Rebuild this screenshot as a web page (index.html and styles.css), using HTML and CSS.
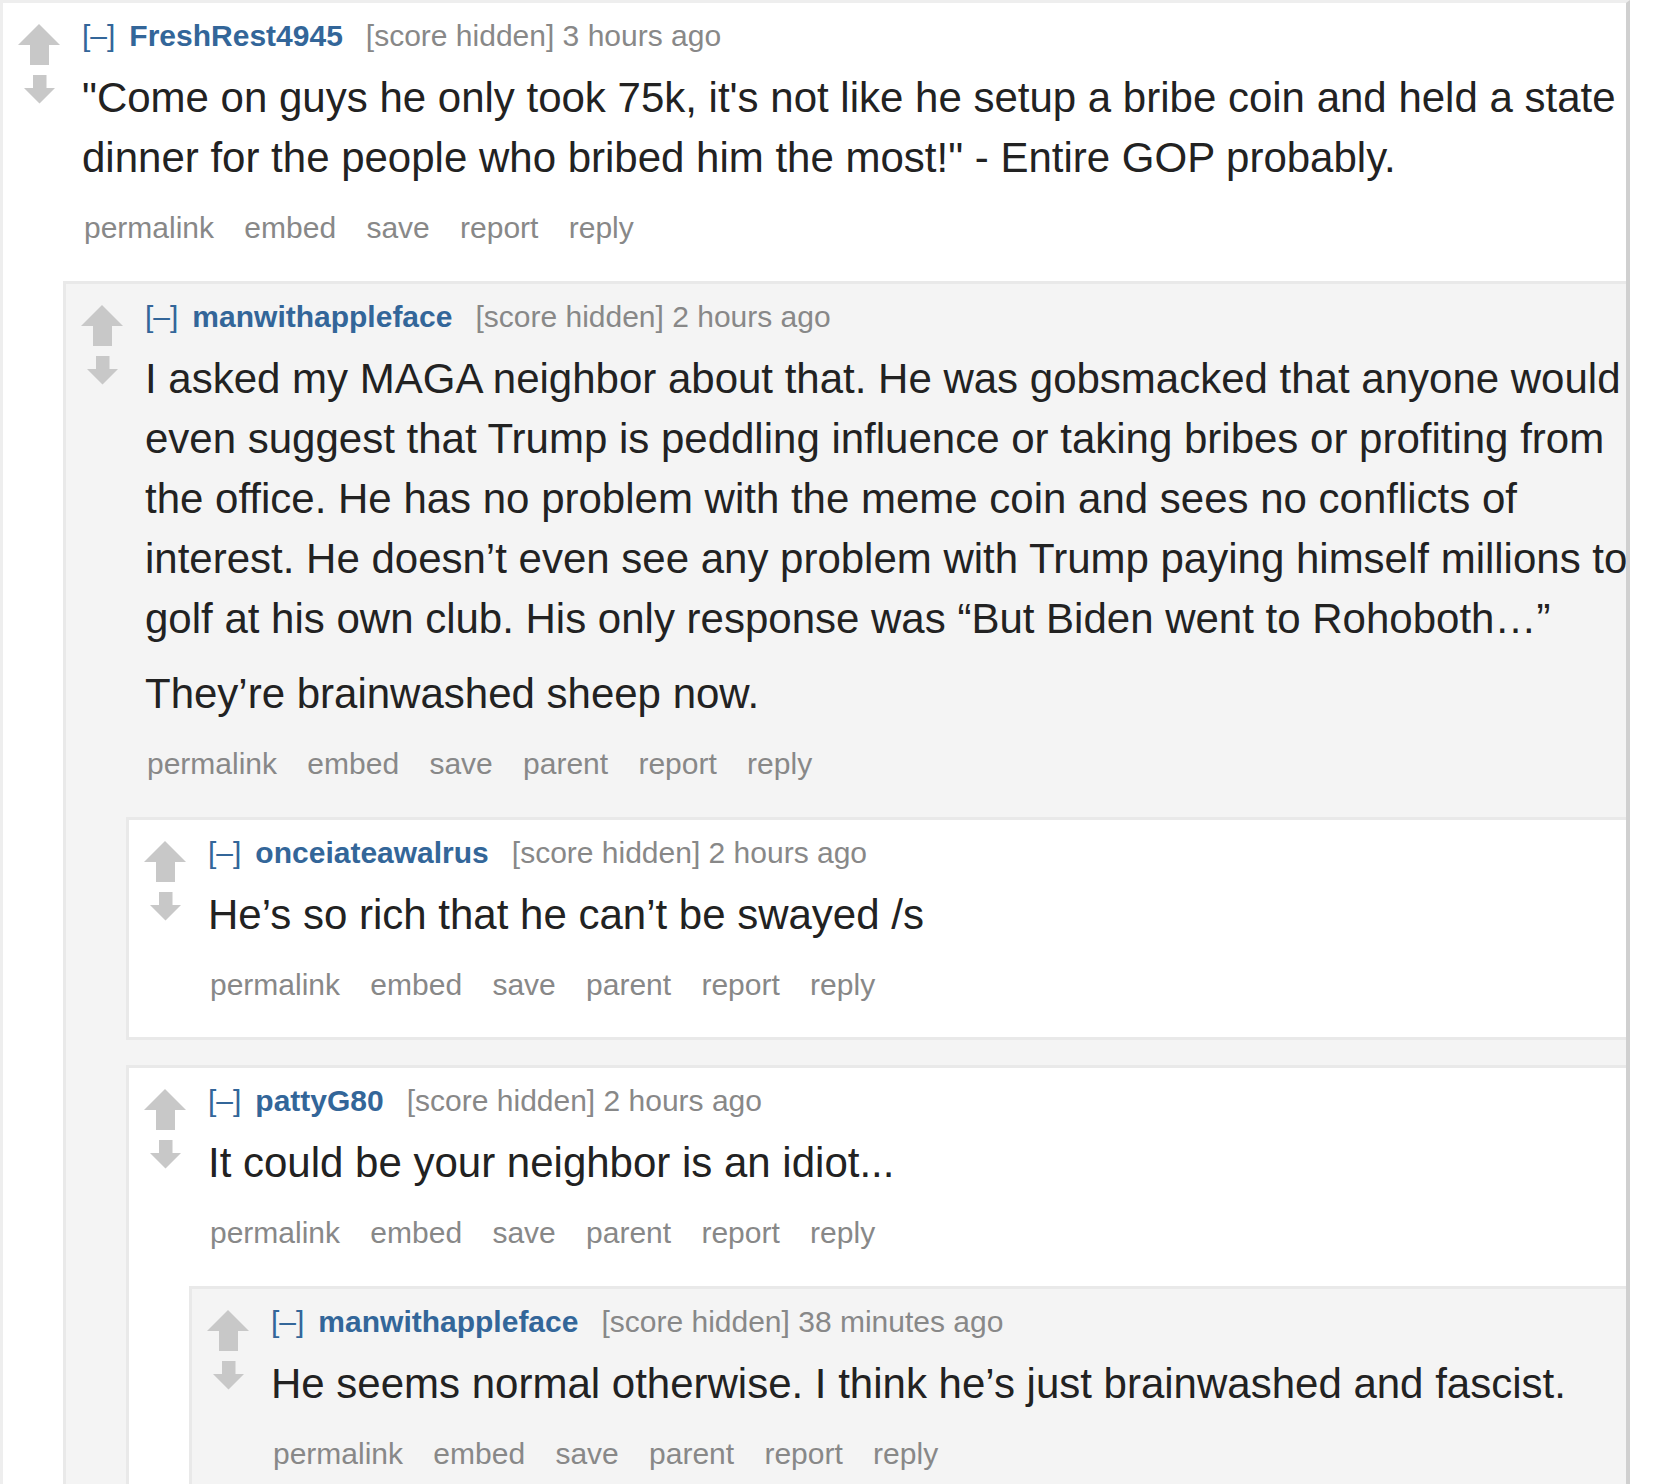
FILE: index.html
```html
<!DOCTYPE html>
<html>
<head>
<meta charset="utf-8">
<title>comments</title>
<link rel="stylesheet" href="styles.css">
</head>
<body>
<div class="frame">
  <div class="thread">
    <div class="comment">
      <div class="row">
        <div class="midcol"><svg class="arrows" viewBox="0 0 42 80"><path d="M21 0 L42 21 L31 21 L31 41 L12 41 L12 21 L0 21 Z"/><path d="M15 51 L28.5 51 L28.5 64 L37 64 L21.5 79.5 L6 64 L15 64 Z"/></svg></div>
        <div class="entry">
          <p class="tagline"><a class="expand">[–]</a><a class="author">FreshRest4945</a><span class="score">[score hidden] 3 hours ago</span></p>
          <div class="md">
            <p>"Come on guys he only took 75k, it's not like he setup a bribe coin and held a state dinner for the people who bribed him the most!" - Entire GOP probably.</p>
          </div>
          <ul class="buttons"><li>permalink</li><li>embed</li><li>save</li><li>report</li><li>reply</li></ul>
        </div>
      </div>
      <div class="child">
        <div class="comment box odd">
          <div class="row">
            <div class="midcol"><svg class="arrows" viewBox="0 0 42 80"><path d="M21 0 L42 21 L31 21 L31 41 L12 41 L12 21 L0 21 Z"/><path d="M15 51 L28.5 51 L28.5 64 L37 64 L21.5 79.5 L6 64 L15 64 Z"/></svg></div>
            <div class="entry">
              <p class="tagline"><a class="expand">[–]</a><a class="author">manwithappleface</a><span class="score">[score hidden] 2 hours ago</span></p>
              <div class="md">
                <p>I asked my MAGA neighbor about that. He was gobsmacked that anyone would even suggest that Trump is peddling influence or taking bribes or profiting from the office. He has no problem with the meme coin and sees no conflicts of interest. He doesn’t even see any problem with Trump paying himself millions to golf at his own club. His only response was “But Biden went to Rohoboth…”</p>
                <p>They’re brainwashed sheep now.</p>
              </div>
              <ul class="buttons"><li>permalink</li><li>embed</li><li>save</li><li>parent</li><li>report</li><li>reply</li></ul>
            </div>
          </div>
          <div class="child">
            <div class="comment box even">
              <div class="row">
                <div class="midcol"><svg class="arrows" viewBox="0 0 42 80"><path d="M21 0 L42 21 L31 21 L31 41 L12 41 L12 21 L0 21 Z"/><path d="M15 51 L28.5 51 L28.5 64 L37 64 L21.5 79.5 L6 64 L15 64 Z"/></svg></div>
                <div class="entry">
                  <p class="tagline"><a class="expand">[–]</a><a class="author">onceiateawalrus</a><span class="score">[score hidden] 2 hours ago</span></p>
                  <div class="md">
                    <p>He’s so rich that he can’t be swayed /s</p>
                  </div>
                  <ul class="buttons"><li>permalink</li><li>embed</li><li>save</li><li>parent</li><li>report</li><li>reply</li></ul>
                </div>
              </div>
            </div>
            <div class="comment box even">
              <div class="row">
                <div class="midcol"><svg class="arrows" viewBox="0 0 42 80"><path d="M21 0 L42 21 L31 21 L31 41 L12 41 L12 21 L0 21 Z"/><path d="M15 51 L28.5 51 L28.5 64 L37 64 L21.5 79.5 L6 64 L15 64 Z"/></svg></div>
                <div class="entry">
                  <p class="tagline"><a class="expand">[–]</a><a class="author">pattyG80</a><span class="score">[score hidden] 2 hours ago</span></p>
                  <div class="md">
                    <p>It could be your neighbor is an idiot...</p>
                  </div>
                  <ul class="buttons"><li>permalink</li><li>embed</li><li>save</li><li>parent</li><li>report</li><li>reply</li></ul>
                </div>
              </div>
              <div class="child">
                <div class="comment box odd">
                  <div class="row">
                    <div class="midcol"><svg class="arrows" viewBox="0 0 42 80"><path d="M21 0 L42 21 L31 21 L31 41 L12 41 L12 21 L0 21 Z"/><path d="M15 51 L28.5 51 L28.5 64 L37 64 L21.5 79.5 L6 64 L15 64 Z"/></svg></div>
                    <div class="entry">
                      <p class="tagline"><a class="expand">[–]</a><a class="author">manwithappleface</a><span class="score">[score hidden] 38 minutes ago</span></p>
                      <div class="md">
                        <p>He seems normal otherwise. I think he’s just brainwashed and fascist.</p>
                      </div>
                      <ul class="buttons"><li>permalink</li><li>embed</li><li>save</li><li>parent</li><li>report</li><li>reply</li></ul>
                    </div>
                  </div>
                </div>
              </div>
            </div>
          </div>
        </div>
      </div>
    </div>
  </div>
</div>
</body>
</html>
```

FILE: styles.css
```css
html, body {
  margin: 0;
  padding: 0;
  background: #ffffff;
}

body {
  font-family: "Liberation Sans", Arial, sans-serif;
}

.frame {
  width: 1623px;
  border-top: 3px solid #eeeeee;
  border-left: 3px solid #eeeeee;
  border-right: 4px solid #d0d0d0;
  overflow: hidden;
}

.thread {
  width: 1690px;
}

.row {
  display: flex;
}

.midcol {
  flex: none;
  width: 42px;
  padding: 21px 22px 0 15px;
}

.arrows {
  display: block;
  width: 42px;
  height: 80px;
  fill: #c8c8c8;
}

.entry {
  flex: 1;
  min-width: 0;
  padding: 15px 37px 34px 0;
}

.tagline {
  margin: 0;
  font-size: 30px;
  line-height: 36px;
  color: #888888;
  white-space: nowrap;
}

.expand {
  color: #336699;
  margin-right: 14px;
}

.author {
  color: #336699;
  font-weight: bold;
}

.score {
  margin-left: 23px;
}

.md {
  margin-top: 14px;
  font-size: 42px;
  line-height: 60px;
  color: #222222;
  display: flow-root;
}

.md p {
  margin: 0 0 15px;
}

.buttons {
  display: flex;
  gap: 30.3px;
  list-style: none;
  margin: 0;
  padding: 7px 0 0 2px;
  font-size: 30px;
  line-height: 36px;
  color: #888888;
}

.child {
  margin-left: 60px;
}

.box {
  border: 3px solid #e9e9e9;
  margin-top: 25px;
}

.child > .box:first-child {
  margin-top: 1px;
}

.odd {
  background: #f4f4f4;
}

.even {
  background: #ffffff;
}
```
